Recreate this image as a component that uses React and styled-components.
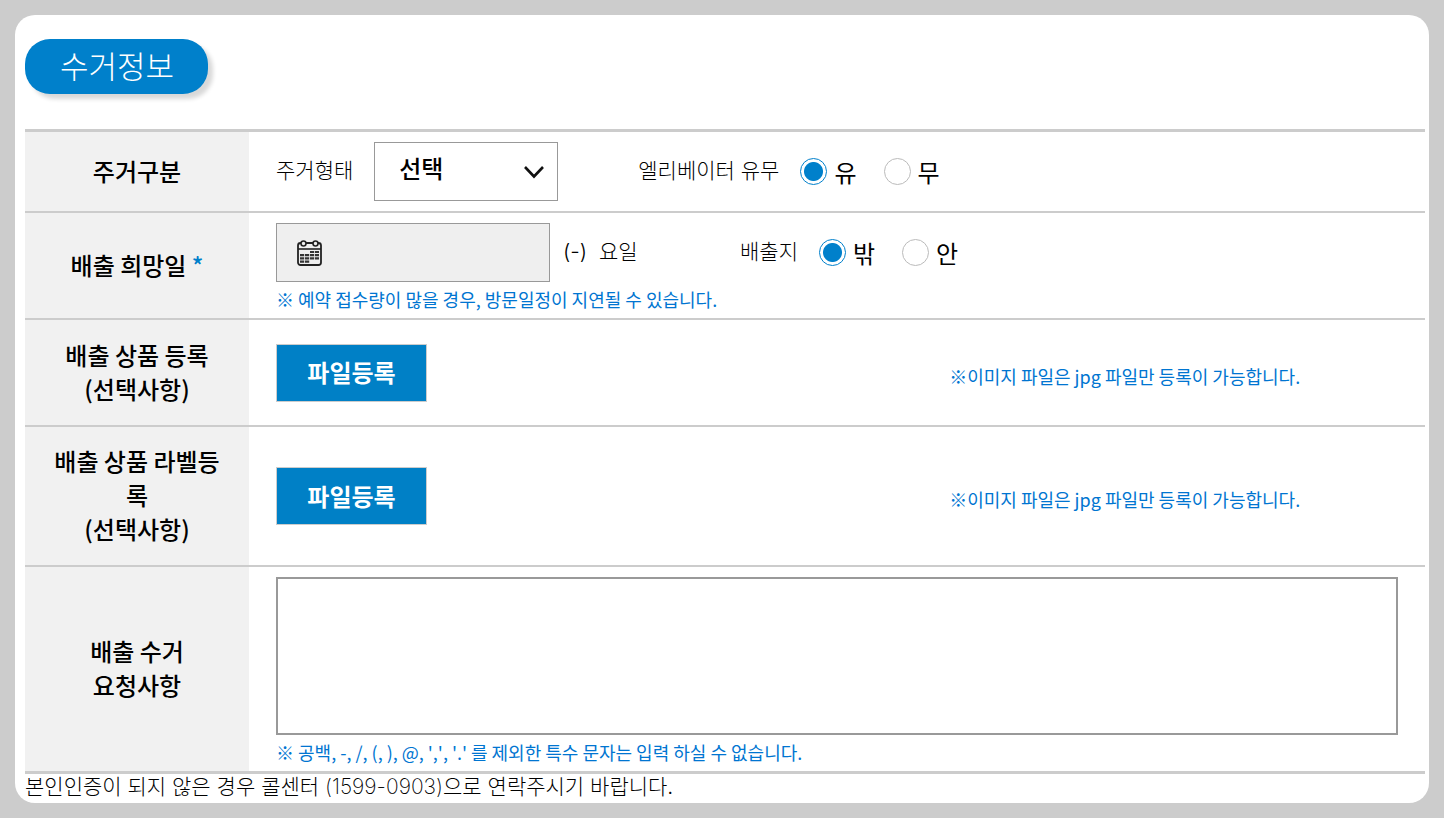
import { useState } from "react";
import styled, { createGlobalStyle } from "styled-components";

const GlobalStyle = createGlobalStyle`
  * {
    box-sizing: border-box;
  }

  body {
    margin: 0;
    padding: 15px;
    background: #ccc;
    color: #000;
    font-family: "Noto Sans CJK KR", "Noto Sans", sans-serif;
    font-kerning: none;
  }

  button, input, select, textarea {
    font-family: inherit;
  }
`;

const Panel = styled.main`
  padding: 24px 4px 0 10px;
  border-radius: 20px;
  background: #fff;
`;

const Title = styled.h2`
  width: fit-content;
  margin: 0 0 35px;
  padding: 0 34px 4px 35px;
  border-radius: 25px;
  background: #0080cb;
  box-shadow: 5px 5px 4px #d9d9d9;
  color: #fff;
  font-size: 31px;
  font-weight: 300;
  line-height: 51px;
`;

const Table = styled.table`
  width: 100%;
  table-layout: fixed;
  border-collapse: separate;
  border-spacing: 0;
  border-top: 3px solid #ccc;
  border-bottom: 3px solid #ccc;
`;

const Row = styled.tr`
  height: ${({ $height }) => $height || "auto"};

  &:not(:last-child) > * {
    border-bottom: 2px solid #ccc;
  }
`;

const Head = styled.th`
  width: 16%;
  padding: 16px 28px 18px;
  background: #f1f1f1;
  font-size: 24px;
  font-weight: 500;
  line-height: 34px;
  text-align: center;
  word-break: break-all;
`;

const Cell = styled.td`
  padding: 10px 27px 0;
  vertical-align: ${({ $middle }) => ($middle ? "middle" : "top")};
  padding-bottom: ${({ $middle }) => ($middle ? "10px" : "0")};
`;

const Required = styled.span`
  color: #0080cb;
`;

const Line = styled.div`
  display: flex;
  align-items: center;
`;

const Caption = styled.span`
  padding-bottom: 2px;
  font-family: Inter, "Noto Sans CJK KR", sans-serif;
  font-size: 21px;
  font-weight: 300;
  line-height: 30px;
  white-space: pre;
`;

const SelectLabel = styled.label`
  display: flex;
  align-items: center;
  gap: 21px;
  margin-right: 80px;
`;

const SelectBox = styled.span`
  display: grid;
  align-items: center;
  width: 184px;
  height: 59px;

  > * {
    grid-area: 1 / 1;
  }

  > svg {
    justify-self: end;
    margin-right: 13px;
    pointer-events: none;
  }
`;

const Select = styled.select`
  width: 100%;
  height: 100%;
  padding: 0 40px 8px 24px;
  border: 1px solid #999;
  border-radius: 0;
  background: #fff;
  color: #000;
  font-size: 24px;
  font-weight: 500;
  appearance: none;
`;

const DateBox = styled.label`
  display: flex;
  align-items: center;
  gap: 10px;
  width: 274px;
  height: 59px;
  margin-right: 13px;
  padding: 0 20px;
  border: 1px solid #999;
  background: #efefef;
`;

const DateInput = styled.input`
  flex: 1;
  min-width: 0;
  border: 0;
  background: transparent;
  font-size: 24px;
`;

const Weekday = styled(Caption)`
  width: 177px;
`;

const RadioGroup = styled.div`
  display: flex;
  align-items: center;
  gap: 21px;
`;

const Radios = styled.div`
  display: flex;
  gap: 27px;
`;

const RadioLabel = styled.label`
  display: flex;
  align-items: center;
  gap: 7px;
  font-size: 24px;
  line-height: 34px;
`;

const Radio = styled.input`
  width: 27px;
  height: 27px;
  margin: 0;
  border: 1px solid #bbb;
  border-radius: 50%;
  background: #fff;
  appearance: none;

  &:checked {
    border-color: #0080cb;
    background: radial-gradient(circle, #0080cb 9px, #fff 10px);
  }
`;

const Note = styled.p`
  margin: 0;
  padding-bottom: 2px;
  color: #0075d1;
  font-size: 18px;
  line-height: 34px;
`;

const FileRow = styled.div`
  display: grid;
  grid-template-columns: 3fr 2fr;
  align-items: center;

  > ${Note} {
    padding-top: 8px;
  }
`;

const FileButton = styled.button`
  width: 151px;
  height: 58px;
  padding: 0 0 2px;
  border: 1px solid #ccc;
  background: #0080c6;
  color: #fff;
  font-size: 24px;
  font-weight: 700;
`;

const TextArea = styled.textarea`
  display: block;
  width: 100%;
  height: 158px;
  padding: 10px;
  border: 2px solid #999;
  font-size: 20px;
  resize: none;
`;

const Footer = styled.p`
  margin: 0;
  padding-bottom: 4px;
  font-family: Inter, "Noto Sans CJK KR", sans-serif;
  font-size: 21px;
  font-weight: 300;
  line-height: 25px;
`;

const Phone = styled.span`
  font-weight: 200;
`;

const ChevronIcon = () => (
  <svg width="22" height="16" viewBox="0 0 22 16" fill="none" aria-hidden="true">
    <path d="M2 3 11 12.5 20 3" stroke="#111" strokeWidth="2.6" />
  </svg>
);

const CalendarIcon = () => (
  <svg width="25" height="26" viewBox="0 0 25 26" fill="none" aria-hidden="true">
    <rect x="1" y="3" width="23" height="22" rx="2.5" stroke="#222" strokeWidth="1.8" />
    <path d="M1 9h23" stroke="#222" strokeWidth="1.6" />
    <circle cx="6.5" cy="3.5" r="2.5" fill="#efefef" stroke="#222" strokeWidth="1.6" />
    <circle cx="18.5" cy="3.5" r="2.5" fill="#efefef" stroke="#222" strokeWidth="1.6" />
    <path
      d="M13 12h9M3 15.2h19M3 18.4h19M3 21.6h10"
      stroke="#333"
      strokeWidth="2.2"
      strokeDasharray="4.2 .8"
    />
  </svg>
);

const RadioField = ({ name, caption, options }) => {
  const [value, setValue] = useState(options[0]);

  return (
    <RadioGroup role="radiogroup" aria-labelledby={`${name}-caption`}>
      <Caption id={`${name}-caption`}>{caption}</Caption>
      <Radios>
        {options.map((option) => (
          <RadioLabel key={option}>
            <Radio
              type="radio"
              name={name}
              value={option}
              checked={value === option}
              onChange={() => setValue(option)}
            />
            {option}
          </RadioLabel>
        ))}
      </Radios>
    </RadioGroup>
  );
};

const FileField = () => (
  <FileRow>
    <FileButton type="button">파일등록</FileButton>
    <Note>※이미지 파일은 jpg 파일만 등록이 가능합니다.</Note>
  </FileRow>
);

const App = () => {
  return (
    <>
      <GlobalStyle />
      <Panel>
        <Title>수거정보</Title>
        <Table>
          <tbody>
            <Row>
              <Head scope="row">주거구분</Head>
              <Cell $middle>
                <Line>
                  <SelectLabel>
                    <Caption>주거형태</Caption>
                    <SelectBox>
                      <Select defaultValue="">
                        <option value="">선택</option>
                      </Select>
                      <ChevronIcon />
                    </SelectBox>
                  </SelectLabel>
                  <RadioField name="elevator" caption="엘리베이터 유무" options={["유", "무"]} />
                </Line>
              </Cell>
            </Row>
            <Row>
              <Head scope="row">
                배출 희망일 <Required>*</Required>
              </Head>
              <Cell>
                <Line>
                  <DateBox>
                    <CalendarIcon />
                    <DateInput type="text" aria-label="배출 희망일" readOnly />
                  </DateBox>
                  <Weekday>(-)  요일</Weekday>
                  <RadioField name="place" caption="배출지" options={["밖", "안"]} />
                </Line>
                <Note>※ 예약 접수량이 많을 경우, 방문일정이 지연될 수 있습니다.</Note>
              </Cell>
            </Row>
            <Row $height="107px">
              <Head scope="row">
                배출 상품 등록
                <br />
                (선택사항)
              </Head>
              <Cell $middle>
                <FileField />
              </Cell>
            </Row>
            <Row $height="140px">
              <Head scope="row">
                배출 상품 라벨등록
                <br />
                (선택사항)
              </Head>
              <Cell $middle>
                <FileField />
              </Cell>
            </Row>
            <Row>
              <Head scope="row">
                배출 수거
                <br />
                요청사항
              </Head>
              <Cell>
                <TextArea aria-label="배출 수거 요청사항" />
                <Note>※ 공백, -, /, (, ), @, ',', '.' 를 제외한 특수 문자는 입력 하실 수 없습니다.</Note>
              </Cell>
            </Row>
          </tbody>
        </Table>
        <Footer>
          본인인증이 되지 않은 경우 콜센터 <Phone>(1599-0903)</Phone>으로 연락주시기 바랍니다.
        </Footer>
      </Panel>
    </>
  );
};

export default App;
